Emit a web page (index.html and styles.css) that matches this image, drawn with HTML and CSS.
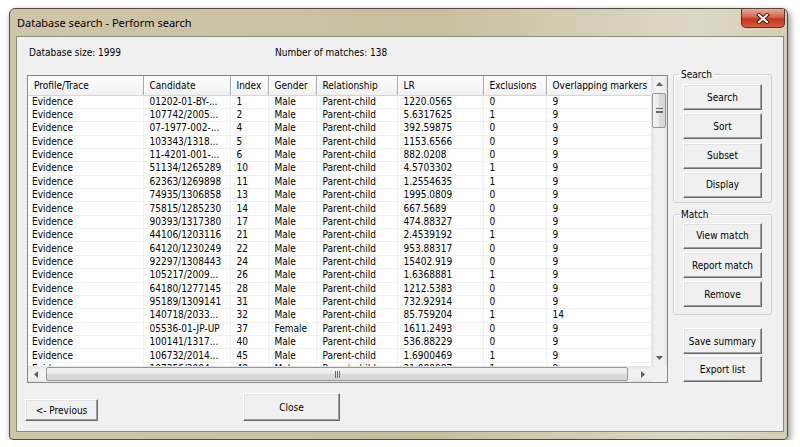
FILE: index.html
```html
<!DOCTYPE html>
<html lang="en">
<head>
    <meta charset="UTF-8">
    <meta name="viewport" content="width=device-width, initial-scale=1.0">
    <title>Database search - Perform search</title>
    <link rel="stylesheet" href="styles.css">
</head>
<body>
    <div class="window">
        <div class="titlebar">
            <span class="title">Database search - Perform search</span>
            <button class="close-x" title="Close">
                <svg width="14" height="11" viewBox="0 0 14 11">
                    <path d="M3 2 L11 9 M11 2 L3 9" stroke="#4a1a10" stroke-width="4" stroke-linecap="square"/>
                    <path d="M3 2 L11 9 M11 2 L3 9" stroke="#ffffff" stroke-width="2" stroke-linecap="square"/>
                </svg>
            </button>
        </div>

        <div class="client">
            <div class="info">
                <span class="db-size">Database size: 1999</span>
                <span class="matches">Number of matches: 138</span>
            </div>

            <div class="main">
                <!-- results list -->
                <div class="listview">
                    <div class="lv-content">
                        <table class="grid">
                            <colgroup>
                                <col style="width:115px">
                                <col style="width:87px">
                                <col style="width:38px">
                                <col style="width:48px">
                                <col style="width:81px">
                                <col style="width:86px">
                                <col style="width:63px">
                                <col style="width:105px">
                            </colgroup>
                            <thead>
                                <tr>
                                    <th>Profile/Trace</th>
                                    <th>Candidate</th>
                                    <th>Index</th>
                                    <th>Gender</th>
                                    <th>Relationship</th>
                                    <th>LR</th>
                                    <th>Exclusions</th>
                                    <th>Overlapping markers</th>
                                </tr>
                            </thead>
                            <tbody id="resultBody">
                                <!-- rows are inserted here -->
                            </tbody>
                        </table>
                    </div>

                    <div class="vscroll">
                        <div class="sb-arrow">
                            <svg width="7" height="4" viewBox="0 0 7 4"><path d="M0 4 L3.5 0 L7 4 Z" fill="#606060"/></svg>
                        </div>
                        <div class="sb-thumb v-thumb">
                            <span class="grip-h"></span>
                        </div>
                        <div class="sb-track"></div>
                        <div class="sb-arrow">
                            <svg width="7" height="4" viewBox="0 0 7 4"><path d="M0 0 L7 0 L3.5 4 Z" fill="#606060"/></svg>
                        </div>
                    </div>

                    <div class="hscroll">
                        <div class="sb-arrow">
                            <svg width="4" height="7" viewBox="0 0 4 7"><path d="M4 0 L4 7 L0 3.5 Z" fill="#606060"/></svg>
                        </div>
                        <div class="sb-thumb h-thumb">
                            <span class="grip-v"></span>
                        </div>
                        <div class="sb-track"></div>
                        <div class="sb-arrow">
                            <svg width="4" height="7" viewBox="0 0 4 7"><path d="M0 0 L4 3.5 L0 7 Z" fill="#606060"/></svg>
                        </div>
                    </div>

                    <div class="corner"></div>
                </div>

                <!-- command buttons -->
                <div class="side">
                    <fieldset class="group search-group">
                        <legend>Search</legend>
                        <button class="btn">Search</button>
                        <button class="btn">Sort</button>
                        <button class="btn">Subset</button>
                        <button class="btn">Display</button>
                    </fieldset>

                    <fieldset class="group match-group">
                        <legend>Match</legend>
                        <button class="btn">View match</button>
                        <button class="btn">Report match</button>
                        <button class="btn">Remove</button>
                    </fieldset>

                    <div class="extra">
                        <button class="btn">Save summary</button>
                        <button class="btn">Export list</button>
                    </div>
                </div>
            </div>

            <div class="footer">
                <button class="btn prev-btn">&lt;- Previous</button>
                <button class="btn close-btn">Close</button>
            </div>
        </div>
    </div>

    <script>
        // Search results: candidate, index, gender, LR, exclusions, overlapping markers
        const results = [
            ['01202-01-BY-...', 1, 'Male', '1220.0565', 0, 9],
            ['107742/2005...', 2, 'Male', '5.6317625', 1, 9],
            ['07-1977-002-...', 4, 'Male', '392.59875', 0, 9],
            ['103343/1318...', 5, 'Male', '1153.6566', 0, 9],
            ['11-4201-001-...', 6, 'Male', '882.0208', 0, 9],
            ['51134/1265289', 10, 'Male', '4.5703302', 1, 9],
            ['62363/1269898', 11, 'Male', '1.2554635', 1, 9],
            ['74935/1306858', 13, 'Male', '1995.0809', 0, 9],
            ['75815/1285230', 14, 'Male', '667.5689', 0, 9],
            ['90393/1317380', 17, 'Male', '474.88327', 0, 9],
            ['44106/1203116', 21, 'Male', '2.4539192', 1, 9],
            ['64120/1230249', 22, 'Male', '953.88317', 0, 9],
            ['92297/1308443', 24, 'Male', '15402.919', 0, 9],
            ['105217/2009...', 26, 'Male', '1.6368881', 1, 9],
            ['64180/1277145', 28, 'Male', '1212.5383', 0, 9],
            ['95189/1309141', 31, 'Male', '732.92914', 0, 9],
            ['140718/2033...', 32, 'Male', '85.759204', 1, 14],
            ['05536-01-JP-UP', 37, 'Female', '1611.2493', 0, 9],
            ['100141/1317...', 40, 'Male', '536.88229', 0, 9],
            ['106732/2014...', 45, 'Male', '1.6900469', 1, 9],
            ['107356/2004...', 48, 'Male', '21.089987', 1, 9]
        ];

        const resultBody = document.getElementById('resultBody');
        results.forEach(r => {
            const row = document.createElement('tr');
            row.innerHTML = `
                <td>Evidence</td>
                <td>${r[0]}</td>
                <td>${r[1]}</td>
                <td>${r[2]}</td>
                <td>Parent-child</td>
                <td>${r[3]}</td>
                <td>${r[4]}</td>
                <td>${r[5]}</td>
            `;
            resultBody.appendChild(row);
        });
    </script>
</body>
</html>
```

FILE: styles.css
```css
* {
    box-sizing: border-box;
}
body {
    margin: 0;
    background-color: #fff;
    font-family: "DejaVu Sans Condensed", "DejaVu Sans", sans-serif;
    font-size: 10px;
    color: #000;
}
.window {
    margin: 8px 0 0 9px;
    width: 779px;
    height: 432px;
    border: 1px solid #4e4b42;
    border-radius: 6px 6px 4px 4px;
    background: linear-gradient(to right, #cec6aa, #c8bf9f 55%, #ddd8c6 88%, #d4cdb8);
    box-shadow: 2px 3px 7px rgba(0, 0, 0, 0.45);
    display: flex;
    flex-direction: column;
}
.titlebar {
    height: 27px;
    display: flex;
    justify-content: space-between;
    align-items: flex-start;
}
.title {
    font-family: "Noto Sans", "Open Sans", sans-serif;
    font-size: 11px;
    line-height: 27px;
    padding-left: 7px;
}
.close-x {
    width: 44px;
    height: 19px;
    margin-right: 2px;
    padding: 0;
    border: 1px solid #6b2b1d;
    border-top: none;
    border-radius: 0 0 5px 5px;
    background: linear-gradient(#eaa898, #d6654d 45%, #c03a20 55%, #d45a3e);
    display: flex;
    align-items: center;
    justify-content: center;
}
.client {
    flex: 1;
    margin: 0 3px 7px 6px;
    padding-left: 8px;
    background-color: #f0f0f0;
    border: 1px solid #8f8b7a;
    display: flex;
    flex-direction: column;
}
.info {
    display: flex;
    margin: 9px 0 0 4px;
    line-height: 13px;
}
.db-size {
    width: 246px;
}
.main {
    display: flex;
    align-items: flex-start;
    margin-top: 9px;
}

/* list view */
.listview {
    margin: 7px 0 0 2px;
    width: 641px;
    height: 308px;
    border: 1px solid #828790;
    background-color: #fff;
    display: grid;
    grid-template-columns: 623px 16px;
    grid-template-rows: 290px 16px;
}
.lv-content {
    overflow: hidden;
}
.grid {
    table-layout: fixed;
    border-collapse: collapse;
    width: 623px;
}
.grid th {
    height: 19px;
    padding: 0 0 0 6px;
    text-align: left;
    font-weight: normal;
    white-space: nowrap;
    overflow: hidden;
    background: linear-gradient(#fdfdfd, #f1f1f1);
    border-right: 1px solid #a8a8a8;
    border-bottom: 1px solid #d5d5d5;
    box-shadow: inset 1px 0 0 #fff;
}
.grid td {
    height: 13.37px;
    padding: 0 0 0 6px;
    line-height: 12px;
    white-space: nowrap;
    overflow: hidden;
    border-right: 1px solid #f0f0f0;
    border-bottom: 1px solid #f0f0f0;
}
.grid td:first-child {
    padding-left: 4px;
}

/* scroll bars */
.vscroll {
    display: flex;
    flex-direction: column;
    background: linear-gradient(to right, #e3e3e3, #f1f1f1 25%, #f1f1f1 75%, #e3e3e3);
}
.hscroll {
    display: flex;
    background: linear-gradient(#e3e3e3, #f1f1f1 25%, #f1f1f1 75%, #e3e3e3);
}
.sb-arrow {
    width: 16px;
    height: 16px;
    flex: none;
    display: flex;
    align-items: center;
    justify-content: center;
}
.sb-track {
    flex: 1;
}
.sb-thumb {
    flex: none;
    border: 1px solid #979797;
    border-radius: 2px;
    display: flex;
    align-items: center;
    justify-content: center;
}
.v-thumb {
    height: 35px;
    margin: 1px 1px 0;
    background: linear-gradient(to right, #f4f4f4, #e9e9e9 50%, #dcdcdc 51%, #d6d6d6);
}
.h-thumb {
    width: 582px;
    margin: 1px 0 0 2px;
    height: 14px;
    background: linear-gradient(#f4f4f4, #e9e9e9 50%, #dcdcdc 51%, #d6d6d6);
}
.grip-h {
    width: 7px;
    height: 5px;
    border-top: 1px solid #6a6a6a;
    border-bottom: 1px solid #6a6a6a;
    background: linear-gradient(transparent 1.5px, #6a6a6a 1.5px, #6a6a6a 2.5px, transparent 2.5px);
}
.grip-v {
    width: 5px;
    height: 7px;
    border-left: 1px solid #6a6a6a;
    border-right: 1px solid #6a6a6a;
    background: linear-gradient(to right, transparent 1.5px, #6a6a6a 1.5px, #6a6a6a 2.5px, transparent 2.5px);
}
.corner {
    background-color: #f0f0f0;
}

/* right hand buttons */
.side {
    margin-left: 5px;
    width: 99px;
    display: flex;
    flex-direction: column;
}
.group {
    margin: 0;
    padding: 3px 9px 4px;
    border: 1px solid #d0d0d0;
    border-radius: 3px;
    box-shadow: inset 1px 1px 0 #fff;
    display: flex;
    flex-direction: column;
    gap: 3.3px;
}
.group legend {
    margin-left: -4px;
    padding: 0 2px;
    line-height: 13px;
}
.match-group {
    margin-top: 5px;
    padding: 2px 9px 7px;
}
.extra {
    margin-top: 13px;
    padding-left: 10px;
    display: flex;
    flex-direction: column;
    gap: 2px;
}
.btn {
    width: 79px;
    height: 26px;
    padding: 0;
    font: inherit;
    color: #000;
    background-color: #f0f0f0;
    border: 1px solid;
    border-color: #fff #696969 #696969 #fff;
    box-shadow: inset -1px -1px 0 #a0a0a0, inset 1px 1px 0 #e3e3e3;
}

/* bottom row */
.footer {
    display: flex;
    align-items: flex-end;
    margin-top: 10px;
}
.prev-btn {
    width: 73px;
    height: 22px;
}
.close-btn {
    margin-left: 145px;
    width: 97px;
    height: 28px;
}
```
